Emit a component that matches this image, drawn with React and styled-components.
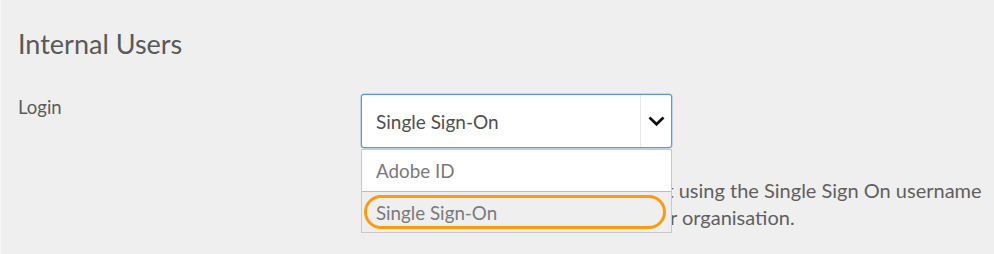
import React from "react";
import styled, { createGlobalStyle } from "styled-components";

const Global = createGlobalStyle`
  html, body { margin: 0; padding: 0; background: #efefef; }
  body { font-family: Lato, "Open Sans", sans-serif; color: #5b5b5b; }
`;

const Page = styled.div`
  width: 994px;
  height: 254px;
  box-sizing: border-box;
  padding: 26px 0 0 17px;
  border-left: 1px solid #f7f7f7;
  overflow: hidden;
`;

const Heading = styled.h2`
  margin: 0;
  font-size: 27px;
  font-weight: 400;
  line-height: 36px;
  color: #595959;
`;

const Row = styled.div`
  display: grid;
  grid-template-columns: 343px 1fr;
  margin-top: 32px;
`;

const Label = styled.div`
  font-size: 18.5px;
  line-height: 24px;
  padding-top: 1px;
  color: #5b5b5b;
`;

const Field = styled.div`
  position: relative;
  width: 311px;
`;

const Select = styled.div`
  box-sizing: border-box;
  height: 54px;
  background: #fff;
  border: 1px solid #5b98d8;
  border-radius: 3px;
  box-shadow: 0 0 0 0.5px #8fb9e6;
  display: flex;
  align-items: stretch;
`;

const Value = styled.div`
  flex: 1;
  display: flex;
  align-items: center;
  padding-left: 14px;
  padding-top: 1px;
  font-size: 19px;
  color: #4f4f4f;
`;

const Arrow = styled.div`
  width: 29px;
  border-left: 1px solid #e8e8e8;
  display: flex;
  align-items: center;
  justify-content: center;
  padding-left: 1px;
`;

const Help = styled.p`
  margin: 29px 0 0;
  width: 640px;
  font-size: 20px;
  line-height: 27px;
  color: #5f5f5f;
  white-space: nowrap;
`;

const Menu = styled.ul`
  position: absolute;
  left: 0;
  top: 55px;
  width: 311px;
  box-sizing: border-box;
  margin: 0;
  padding: 0;
  list-style: none;
  border: 1px solid #c9c9c9;
  background: #fff;
`;

const Option = styled.li`
  position: relative;
  height: 41px;
  box-sizing: border-box;
  display: flex;
  align-items: center;
  padding-left: 14px;
  font-size: 18.8px;
  color: #7a7a7a;
  background: ${(p) => (p.$active ? "#efefef" : "#fff")};
  border-top: ${(p) => (p.$first ? "none" : "1px solid #bdbdbd")};
`;

const FocusRing = styled.span`
  position: absolute;
  left: 2px;
  right: 5px;
  top: 3px;
  bottom: 3px;
  border: 3px solid #ff9a0a;
  border-radius: 17px;
  pointer-events: none;
`;

const Chevron = () => (
  <svg width="17" height="10" viewBox="0 0 17 10">
    <path d="M1.5 1.5 L8.5 8.3 L15.5 1.5" fill="none" stroke="#111" strokeWidth="2.7" />
  </svg>
);

export default function App() {
  return (
    <>
      <Global />
      <Page>
        <Heading>Internal Users</Heading>
        <Row>
          <Label>Login</Label>
          <Field>
            <Select>
              <Value>Single Sign-On</Value>
              <Arrow>
                <Chevron />
              </Arrow>
            </Select>
            <Help>
              Users sign in to Adobe in a way that using the Single Sign On username
              <br />
              and the passwords provided by your organisation.
            </Help>
            <Menu>
              <Option $first>Adobe ID</Option>
              <Option $active>
                Single Sign-On
                <FocusRing />
              </Option>
            </Menu>
          </Field>
        </Row>
      </Page>
    </>
  );
}
